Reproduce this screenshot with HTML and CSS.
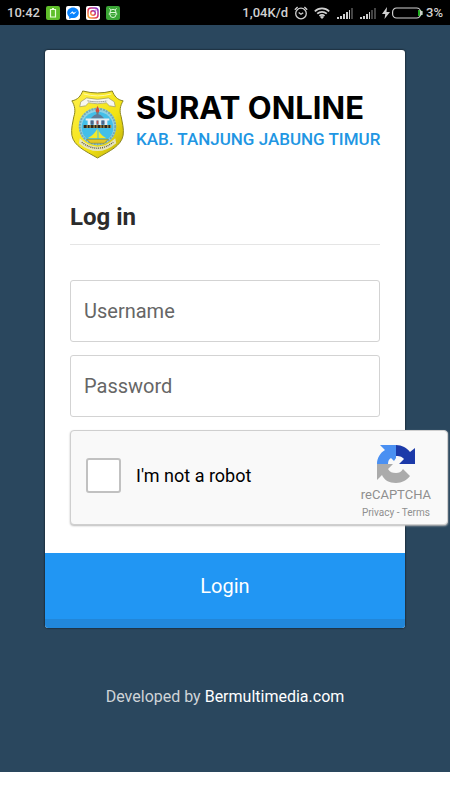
FILE: index.html
```
<!DOCTYPE html>
<html lang="en">
<head>
    <meta charset="UTF-8">
    <meta name="viewport" content="width=device-width, initial-scale=1.0">
    <title>Surat Online</title>
    <link rel="stylesheet" href="styles.css">
</head>
<body>
    <header class="status-bar">
        <div class="status-left">
            <span>10:42</span>
            <svg class="app-icon" viewBox="0 0 14 14">
                <rect width="14" height="14" rx="2" fill="#5fbf2a"/>
                <path d="M4.500 3.500h5v7.500h-5zM6 2.500h2" fill="none" stroke="#e9ffd9" stroke-width="1.200"/>
            </svg>
            <svg class="app-icon" viewBox="0 0 14 14">
                <rect width="14" height="14" rx="2" fill="#fff"/>
                <path d="M7 1.500C3.700 1.500 1.200 3.800 1.200 6.800c0 1.700.8 3.100 2 4.100v2l1.900-1c.6.1 1.200.2 1.900.2 3.300 0 5.800-2.400 5.800-5.300S10.300 1.500 7 1.500z" fill="#0a84ff"/>
                <path d="M3.300 8.500l3-3.200 1.600 1.500 2.900-1.500-3 3.200-1.600-1.500z" fill="#fff"/>
            </svg>
            <svg class="app-icon" viewBox="0 0 14 14">
                <defs>
                    <linearGradient id="insta" x1="0" y1="1" x2="1" y2="0">
                        <stop offset="0" stop-color="#fdb733"/>
                        <stop offset=".5" stop-color="#e02d5c"/>
                        <stop offset="1" stop-color="#7a35d6"/>
                    </linearGradient>
                </defs>
                <rect width="14" height="14" rx="2" fill="#fff"/>
                <rect x="2" y="2" width="10" height="10" rx="3" fill="none" stroke="url(#insta)" stroke-width="1.500"/>
                <circle cx="7" cy="7" r="2.300" fill="none" stroke="url(#insta)" stroke-width="1.400"/>
                <circle cx="9.900" cy="4.100" r=".7" fill="#b92fa5"/>
            </svg>
            <svg class="app-icon" viewBox="0 0 14 14">
                <rect width="14" height="14" rx="2" fill="#3aa535"/>
                <path d="M4 6.300a3 3 0 0 1 6 0v2.200a3 3 0 0 1-6 0zM4 6.500h6M4.700 4L3.500 2.300M9.300 4l1.200-1.700M4 8H2.700M10 8h1.300M5.700 8.500h.6M7.700 8.500h.6" fill="none" stroke="#d9f7d4"/>
            </svg>
        </div>
        <div class="status-right">
            <span>1,04K/d</span>
            <svg class="alarm" viewBox="0 0 14 14" fill="none" stroke="#d0d0d0" stroke-width="1.300">
                <circle cx="7" cy="7.500" r="5.300"/>
                <path d="M4.700 6.500L7 8.300l2.200-1.500M.8 3.800L3.600 1M13.200 3.800L10.400 1"/>
            </svg>
            <svg class="wifi" viewBox="0 0 16 12" fill="none" stroke="#d0d0d0" stroke-width="1.700">
                <path d="M.8 4.300a10.300 10.300 0 0 1 14.400 0M3.200 6.700a7 7 0 0 1 9.600 0M5.500 9a3.700 3.700 0 0 1 5 0"/>
                <path d="M8 12l-2-2a3 3 0 0 1 4 0z" fill="#d0d0d0" stroke="none"/>
            </svg>
            <svg class="signal" viewBox="0 0 16 12">
                <path d="M0 10h2v2H0zM3 9h2v3H3zM6 7h2v5H6zM9 5h2v7H9zM12 3h1v9h-1z" fill="#d0d0d0"/>
                <path d="M14 1h2v11h-2z" fill="#444"/>
            </svg>
            <svg class="signal" viewBox="0 0 16 12">
                <path d="M0 10h2v2H0zM3 9h2v3H3zM6 7h2v5H6zM9 5h1v7H9z" fill="#d0d0d0"/>
                <path d="M11 3h2v9h-2zM14 1h2v11h-2z" fill="#444"/>
            </svg>
            <svg class="battery" viewBox="0 0 41 12">
                <path d="M5 0L0 7h3.300L2.500 12 8 5H4.500z" fill="#d0d0d0"/>
                <path d="M36 3h1.500a3 3 0 0 1 0 6H36z" fill="#1fae1f"/>
                <rect x="10.600" y="1" width="28" height="10" rx="4" fill="none" stroke="#d0d0d0" stroke-width="1.200"/>
                <path d="M39.800 4v4" stroke="#d0d0d0" stroke-width="1.500"/>
            </svg>
            <span>3%</span>
        </div>
    </header>

    <main class="login-page">
        <form class="card">
            <div class="card-body">
                <div class="brand">
                    <svg class="crest" viewBox="0 0 54 70">
                        <defs>
                            <linearGradient id="shield" x1="0" y1="0" x2="1" y2="1">
                                <stop offset="0" stop-color="#fff04a"/>
                                <stop offset=".6" stop-color="#f3e313"/>
                                <stop offset="1" stop-color="#b9a90a"/>
                            </linearGradient>
                        </defs>
                        <path d="M12 1q15 4 30 0c2 5 5 9 11 10-3 5-4 10-2 16 1 6 3 12 2 19-2 11-14 16-26 23C15 62 3 57 1 46c-1-7 1-13 2-19 2-6 1-11-2-16 6-1 9-5 11-10z" fill="url(#shield)" stroke="#8a8420" stroke-width="1"/>
                        <path d="M13 4q14 4 28 0" fill="none" stroke="#fff9a8"/>
                        <circle cx="27" cy="37" r="19" fill="#8fd2e6"/>
                        <circle cx="27" cy="37" r="18" fill="none" stroke="#78a8af" stroke-width="2" stroke-dasharray="2 1"/>
                        <circle cx="27" cy="38" r="16" fill="#43bfe9"/>
                        <path d="M10 12l6-4q11 3 22 0l6 4 1 5-6-1-3-3q-9 2-18 0l-3 3-6 1z" fill="#f7f7ef" stroke="#9a986d" stroke-width=".7"/>
                        <path d="M17 11q10 2 20 0" fill="none" stroke="#555" stroke-width="1" stroke-dasharray="1 1"/>
                        <path d="M25 21l2-5 2 5-1 2h-2z" fill="#db4935"/>
                        <path d="M26 22h2v4h-2z" fill="#777"/>
                        <path d="M20 29q7-9 14 0z" fill="#607c99"/>
                        <path d="M15 29h24v2H15zM17 31h3v5h-3zM23 31h3v5h-3zM28 31h3v5h-3zM34 31h3v5h-3z" fill="#e9edf3"/>
                        <path d="M20 31h3v4h-3zM31 31h3v4h-3z" fill="#536789"/>
                        <path d="M26 31h2v4h-2z" fill="#b75656"/>
                        <path d="M13 37h28" stroke="#c9a44d" stroke-width="3"/>
                        <path d="M13 37h28" stroke="#2c2820" stroke-width="3" stroke-dasharray="3 1 2 1"/>
                        <path d="M27 39v10H17q7-4 10-10zM28 40q1 5 8 9h-8z" fill="#f4e92b"/>
                        <path d="M16 50h22l-4 4H20z" fill="#e4c726" stroke="#7a7523" stroke-width=".5"/>
                        <path d="M9 49q18 17 36 0l1 5q-19 16-38 0z" fill="#e6e4bd"/>
                        <path d="M11 53q16 12 32 0" fill="none" stroke="#646142" stroke-width="1.500" stroke-dasharray="1 1"/>
                    </svg>
                    <div class="brand-text">
                        <span class="brand-name">SURAT ONLINE</span>
                        <span class="brand-region">KAB. TANJUNG JABUNG TIMUR</span>
                    </div>
                </div>

                <h1>Log in</h1>

                <input class="field" type="text" placeholder="Username" aria-label="Username">
                <input class="field" type="password" placeholder="Password" aria-label="Password">

                <div class="captcha">
                    <input type="checkbox" id="robot">
                    <label for="robot">I'm not a robot</label>
                    <div class="captcha-brand">
                        <svg class="captcha-logo" viewBox="0 0 38 38">
                            <path d="M19 0H3l5 5C3 8 0 13 0 19h11c0-3 1-5 3-6l3 3 2-3z" fill="#4a90f2"/>
                            <path d="M19 0c6 0 11 3 14 7l5-4v16H22l5-5c-2-2-3-3-8-3z" fill="#1c3aa9"/>
                            <path d="M0 19h16l-5 5c2 3 4 4 8 4 3 0 5-1 7-4l7 7c-3 4-8 7-14 7-7 0-12-3-14-8l-5 5z" fill="#ababab"/>
                        </svg>
                        <span class="captcha-name">reCAPTCHA</span>
                        <span class="captcha-links"><a href="#">Privacy</a> - <a href="#">Terms</a></span>
                    </div>
                </div>
            </div>
            <button type="submit">Login</button>
        </form>

        <footer>Developed by <a href="#">Bermultimedia.com</a></footer>
    </main>
</body>
</html>
```
FILE: styles.css
```
* {
    box-sizing: border-box;
}
body {
    margin: 0;
    min-height: 100vh;
    display: flex;
    flex-direction: column;
    background-color: #ffffff;
    font-family: Roboto, "Liberation Sans", sans-serif;
}
a {
    color: inherit;
    text-decoration: none;
}

/* phone status bar */
.status-bar {
    display: flex;
    justify-content: space-between;
    height: 25px;
    padding: 0 7px;
    background-color: #000000;
    color: #d0d0d0;
    font-size: 13px;
    font-weight: 500;
}
.status-left, .status-right {
    display: flex;
    align-items: center;
    gap: 6px;
}
.app-icon, .alarm {
    width: 14px;
    height: 14px;
}
.wifi, .signal {
    width: 16px;
    height: 12px;
}
.status-right .signal {
    margin-left: 1px;
}
.battery {
    width: 41px;
    height: 12px;
}
.battery + span {
    margin-left: -3px;
}

/* login card */
.login-page {
    flex: 1;
    margin-bottom: 28px;
    padding: 25px 45px;
    background-color: #2a475e;
}
.card {
    border-radius: 3px;
    background-color: #ffffff;
    box-shadow: 0 0 2px #000000;
}
.card-body {
    padding: 40px 25px 28px;
}
.brand {
    display: flex;
    gap: 11px;
}
.crest {
    flex: none;
    width: 55px;
    height: 69px;
}
.brand-text {
    display: flex;
    flex-direction: column;
    white-space: nowrap;
}
.brand-name {
    color: #000000;
    font-family: Inter, sans-serif;
    font-size: 31px;
    font-weight: 700;
    line-height: 36px;
}
.brand-region {
    color: #2196e3;
    font-family: Roboto, sans-serif;
    font-size: 17px;
    font-weight: 500;
    line-height: 26px;
}
h1 {
    margin: 40px 0 35px;
    padding-bottom: 9px;
    border-bottom: 1px solid #e5e5e5;
    color: #2b2b2b;
    font-size: 24px;
    font-weight: 700;
    line-height: 36px;
}
.field {
    display: block;
    width: 100%;
    height: 62px;
    margin-bottom: 13px;
    padding: 0 13px;
    border: 1px solid #d3d3d3;
    border-radius: 3px;
    background-color: #ffffff;
    font-family: inherit;
    font-size: 20px;
}
.field::placeholder {
    color: #666666;
}

/* the widget is wider than the card */
.captcha {
    display: flex;
    align-items: center;
    height: 95px;
    margin-right: -68px;
    padding: 0 16px 4px 15px;
    border: 1px solid #cfcfcf;
    border-radius: 4px;
    background-color: #f9f9f9;
    box-shadow: 0 1px 2px #bbbbbb;
}
.captcha input {
    appearance: none;
    width: 35px;
    height: 35px;
    margin: 0 15px 0 0;
    border: 2px solid #c1c1c1;
    border-radius: 3px;
    background-color: #ffffff;
}
.captcha label {
    flex: 1;
    color: #000000;
    font-size: 18px;
}
.captcha-brand {
    display: flex;
    flex-direction: column;
    align-items: center;
    padding-top: 14px;
    color: #8f8f8f;
}
.captcha-logo {
    width: 38px;
    height: 38px;
}
.captcha-name {
    margin-top: 2px;
    font-size: 13px;
    line-height: 20px;
}
.captcha-links {
    font-size: 10px;
    line-height: 16px;
}

button {
    display: block;
    width: 100%;
    height: 75px;
    padding: 0;
    border: none;
    border-bottom: 9px solid #2187da;
    border-radius: 0 0 3px 3px;
    background-color: #2196f3;
    color: #ffffff;
    font-family: inherit;
    font-size: 20px;
}
footer {
    margin-top: 57px;
    color: #cfd4d8;
    font-size: 16px;
    line-height: 24px;
    text-align: center;
}
footer a {
    color: #ffffff;
}
```
